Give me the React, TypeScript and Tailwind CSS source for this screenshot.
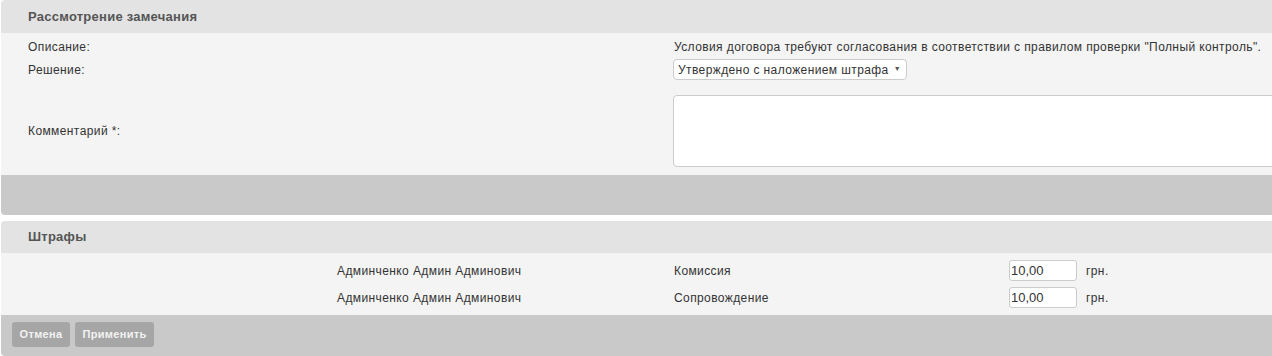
import React from "react";

const font = { fontFamily: '"Liberation Sans", Arial, sans-serif' };

export default function App() {
  return (
    <div className="w-[1272px] h-[356px] overflow-hidden bg-white" style={font}>
      <div className="pl-[1px] w-[1300px]">
        {/* Panel 1 */}
        <div className="rounded-[4px] overflow-hidden">
          <div className="h-[33px] bg-[#e3e3e3] flex items-center pl-[27px] text-[13px] tracking-[0.25px] font-bold text-[#555555]">
            Рассмотрение замечания
          </div>
          <div className="bg-[#f4f4f4] pt-[5px] pb-[8px] pl-[27px] grid grid-cols-[645px_1fr] text-[12px] tracking-[0.4px] text-[#333333]">
            <div className="h-[18px] flex items-center">Описание:</div>
            <div className="h-[18px] flex items-center pl-[1px]">
              Условия договора требуют согласования в соответствии с правилом проверки "Полный контроль".
            </div>
            <div className="h-[21px] mt-[3px] flex items-center">Решение:</div>
            <div className="h-[21px] mt-[3px] flex items-center">
              <div className="h-[21px] w-[234px] bg-white border border-[#cccccc] rounded-[4px] flex items-center pl-[4px] gap-[5px] text-[#333333]">
                <span>Утверждено с наложением штрафа</span>
                <span className="text-[7px] text-[#555555]">▼</span>
              </div>
            </div>
            <div className="h-[72px] mt-[15px] flex items-center">Комментарий *:</div>
            <div className="h-[72px] mt-[15px]">
              <div className="h-[72px] w-[640px] bg-white border border-[#cccccc] rounded-[4px]" />
            </div>
          </div>
          <div className="h-[40px] bg-[#c9c9c9]" />
        </div>

        <div className="h-[6px]" />

        {/* Panel 2 */}
        <div className="rounded-[4px] overflow-hidden">
          <div className="h-[32px] bg-[#e3e3e3] flex items-center pl-[27px] text-[13px] tracking-[0.25px] font-bold text-[#555555]">
            Штрафы
          </div>
          <div className="bg-[#f4f4f4] pt-[7px] pb-[7px] pl-[336px] flex flex-col gap-[6px] text-[12px] tracking-[0.4px] text-[#333333]">
            {["Комиссия", "Сопровождение"].map((t) => (
              <div key={t} className="h-[21px] grid grid-cols-[337px_335px_68px_auto] items-center">
                <div>Админченко Админ Админович</div>
                <div>{t}</div>
                <div className="h-[21px] w-[68px] bg-white border border-[#cccccc] rounded-[3px] flex items-center pl-[1px] text-[13px] tracking-normal">
                  10,00
                </div>
                <div className="pl-[9px]">грн.</div>
              </div>
            ))}
          </div>
          <div className="h-[41px] bg-[#c9c9c9] pt-[7px] pl-[11px] flex gap-[5px]">
            <div className="h-[25px] w-[58px] bg-[#a6a6a6] rounded-[3px] flex items-center justify-center text-[11px] tracking-[0.3px] font-bold text-[#f2f2f2]">
              Отмена
            </div>
            <div className="h-[25px] w-[79px] bg-[#a6a6a6] rounded-[3px] flex items-center justify-center text-[11px] tracking-[0.3px] font-bold text-[#f2f2f2]">
              Применить
            </div>
          </div>
        </div>
      </div>
    </div>
  );
}
